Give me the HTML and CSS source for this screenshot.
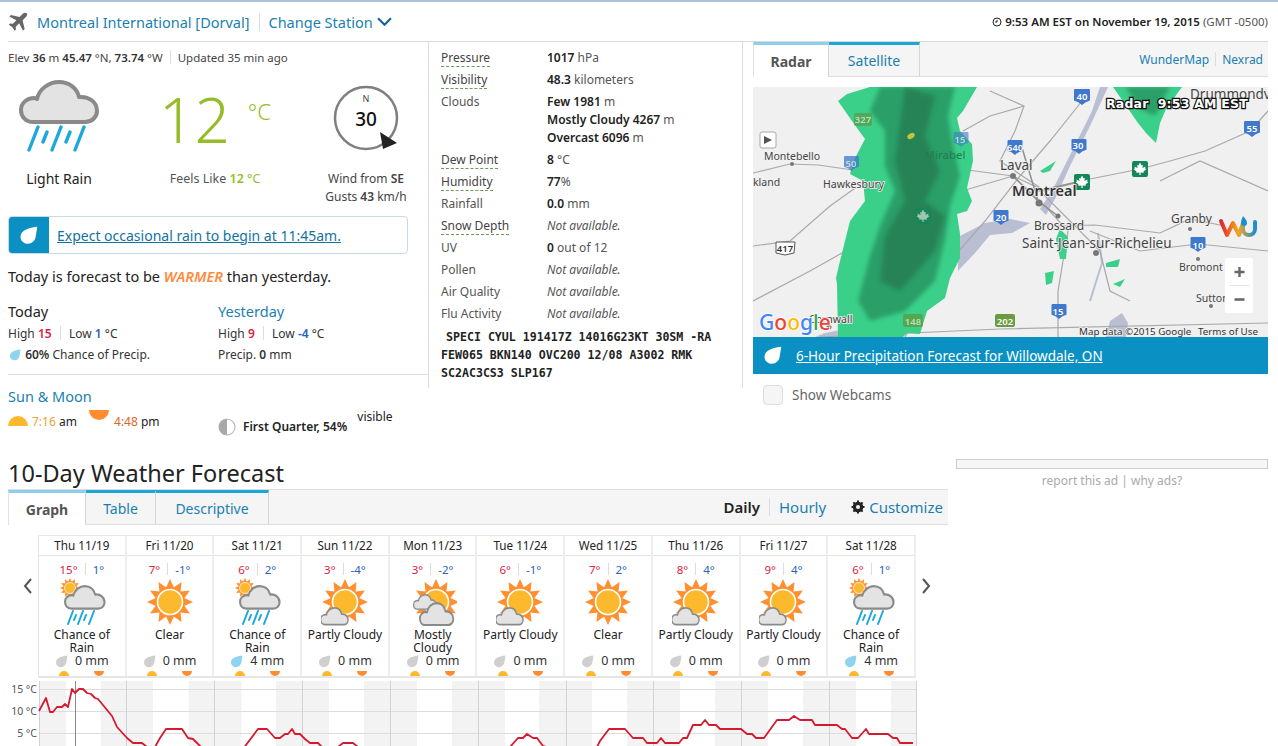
FILE: index.html
```html
<!DOCTYPE html>
<html lang="en">
<head>
<meta charset="utf-8">
<title>Montreal International [Dorval] Weather</title>
<link rel="stylesheet" href="styles.css">
</head>
<body>
<svg class="defs" width="0" height="0">
  <defs>
    <symbol id="drop" viewBox="0 0 24 24"><path d="M23 1C23 1 9 2 4 8C0 13 2 20 8 22C14 24 20 20 21 14C22 9 23 1 23 1Z"/></symbol>
    <g id="rays">
      <polygon id="ray" points="0,-23 5,-12 -5,-12"/>
      <use href="#ray" transform="rotate(30)"/><use href="#ray" transform="rotate(60)"/><use href="#ray" transform="rotate(90)"/>
      <use href="#ray" transform="rotate(120)"/><use href="#ray" transform="rotate(150)"/><use href="#ray" transform="rotate(180)"/>
      <use href="#ray" transform="rotate(210)"/><use href="#ray" transform="rotate(240)"/><use href="#ray" transform="rotate(270)"/>
      <use href="#ray" transform="rotate(300)"/><use href="#ray" transform="rotate(330)"/>
    </g>
    <g id="sun">
      <use href="#rays" fill="#ff8f2f"/>
      <circle r="12.5" fill="#fdb92e" stroke="#fff" stroke-width="1.6"/>
    </g>
    <path id="cloud" d="M14 42C6 42 2 36 2 30C2 23 8 18 15 18C16 18 17 18 18 19C20 9 30 2 40 2C50 2 58 8 60 17C70 16 78 22 78 31C78 37 73 42 66 42Z" fill="#e3e3e3" stroke="#8a8a8a" stroke-width="4" stroke-linejoin="round"/>
    <symbol id="i-clear" viewBox="0 0 48 48"><use href="#sun" transform="translate(24 24)"/></symbol>
    <symbol id="i-partly" viewBox="0 0 48 48"><use href="#sun" transform="translate(24 24)"/><use href="#cloud" transform="translate(-1 29) scale(.36 .42)"/></symbol>
    <symbol id="i-mostly" viewBox="0 0 48 48"><use href="#sun" transform="translate(27 24)"/><use href="#cloud" transform="translate(4 16) scale(.3 .36)"/><use href="#cloud" transform="translate(10 24) scale(.44 .55)"/></symbol>
    <symbol id="i-rain" viewBox="0 0 48 48">
      <g transform="translate(12 10) scale(.44)"><use href="#sun"/></g>
      <use href="#cloud" transform="translate(6 7) scale(.52 .56)"/>
      <g stroke="#1ba8dc" stroke-width="2" stroke-linecap="round"><path d="M10 46L15 33M16 42L18 37M20 46L25 33M26 42L28 37M31 46L36 33"/></g>
    </symbol>
    <symbol id="shield" viewBox="0 0 14 14"><path d="M1 0H13Q14 0 14 1V10Q10 11 7 14Q4 11 0 10V1Q0 0 1 0Z"/></symbol>
    <g id="maple">
      <rect x="-8" y="-8" width="16" height="16" rx="2" fill="#13875a"/>
      <path d="M0-6.5L1.6-3.5L3-4L2.4-1L5.6-2.4L5-.6L6.5 0L3.5 2.6L3.8 3.8L.6 3.4V6H-.6V3.4L-3.8 3.8L-3.5 2.6L-6.5 0L-5-.6L-5.6-2.4L-2.4-1L-3-4L-1.6-3.5Z" fill="#fff"/>
    </g>
    <filter id="soft"><feGaussianBlur stdDeviation="2.2"/></filter>
    <linearGradient id="wu" x1="0" x2="1"><stop offset="0" stop-color="#d92b2b"/><stop offset=".5" stop-color="#f7a71e"/><stop offset="1" stop-color="#1c8fd0"/></linearGradient>
  </defs>
</svg>

<div class="page">
  <header class="station">
    <div class="station-name">
      <svg class="plane" viewBox="0 0 24 24"><path d="M22.5 1.5C21 .2 18.800 1 17.500 2.300L13.800 6L3.500 3.500L1.500 5.500L10 10L5.800 14.200L2.500 13.800L1 15.300L5 18L8 22.500L9.500 21L9.200 17.800L13.500 13.500L18 22.500L20 20.500L17.500 10L21.200 6.300C22.500 5 23.800 3 22.500 1.500Z"/></svg>
      <a class="link">Montreal International [Dorval]</a>
      <span class="pipe tall"></span>
      <a class="link">Change Station</a>
      <svg class="chev" viewBox="0 0 14 8"><path d="M1 1L7 7L13 1"/></svg>
    </div>
    <div class="station-time">
      <svg class="clock" viewBox="0 0 10 10"><circle cx="5" cy="5" r="4"/><path d="M5 2.800V5H3"/></svg>
      <b>9:53 AM EST on November 19, 2015</b> <span class="dim">(GMT -0500)</span>
    </div>
  </header>

  <main class="now">
    <section class="col-left">
      <p class="elev">Elev <b>36</b> m <b>45.47</b> °N, <b>73.74</b> °W <span class="pipe"></span> Updated 35 min ago</p>
      <div class="headline">
        <div class="cond">
          <svg class="cond-icon" viewBox="0 0 80 72">
            <use href="#cloud"/>
            <g stroke="#1ba8dc" stroke-width="3.400" stroke-linecap="round"><path d="M10 70L19 47M24 62L28 52M33 70L42 47M47 62L51 52M56 70L65 47"/></g>
          </svg>
          <div class="cond-label">Light Rain</div>
        </div>
        <div class="temp">
          <div class="temp-big"><span class="temp-num">12</span><span class="temp-unit">°C</span></div>
          <div class="feels">Feels Like <b class="green">12</b> <span class="green">°C</span></div>
        </div>
        <div class="wind">
          <svg class="compass" viewBox="0 0 66 66">
            <circle cx="33" cy="33" r="31" fill="none" stroke="#7f7f7f" stroke-width="2.500"/>
            <text class="compass-n" x="33" y="17" text-anchor="middle">N</text>
            <text class="compass-v" x="33" y="41" text-anchor="middle">30</text>
            <path d="M47 49L64 60L50 66Z" fill="#222" transform="translate(0 -2)"/>
          </svg>
          <div class="wind-text">Wind from <b>SE</b></div>
          <div class="wind-text">Gusts <b>43</b> km/h</div>
        </div>
      </div>
      <div class="alert">
        <span class="alert-drop"><svg class="drop-white" viewBox="0 0 24 24"><use href="#drop"/></svg></span>
        <a class="alert-link">Expect occasional rain to begin at 11:45am.</a>
      </div>
      <p class="compare">Today is forecast to be <em class="warmer">WARMER</em> than yesterday.</p>
      <div class="days-pair">
        <div>
          <div class="pair-title">Today</div>
          <div class="pair-row">High <b class="hot">15</b> <span class="pipe"></span> Low <b class="cold">1</b> °C</div>
          <div class="pair-row link"><svg class="drop-blue" viewBox="0 0 24 24"><use href="#drop"/></svg> <b>60%</b> Chance of Precip.</div>
        </div>
        <div>
          <div class="pair-title link">Yesterday</div>
          <div class="pair-row">High <b class="hot">9</b> <span class="pipe"></span> Low <b class="cold">-4</b> °C</div>
          <div class="pair-row">Precip. <b>0</b> mm</div>
        </div>
      </div>
      <div class="sunmoon">
        <div class="pair-title link">Sun &amp; Moon</div>
        <div class="sunmoon-row">
          <div class="sun-times">
            <span class="rise large"></span><span class="t-rise">7:16</span> am
            <span class="set large"></span><span class="t-set">4:48</span> pm
          </div>
          <div class="moon-text">
            <svg class="moon" viewBox="0 0 18 18"><circle cx="9" cy="9" r="8" fill="#fff" stroke="#bbb" stroke-width="1.200"/><path d="M9 1A8 8 0 0 0 9 17Z" fill="#a8a8a8"/></svg>
            <b>First Quarter, 54%</b> visible
          </div>
        </div>
      </div>
    </section>

    <section class="col-mid">
      <dl class="metrics">
        <dt><span class="dash">Pressure</span></dt><dd><b>1017</b> hPa</dd>
        <dt><span class="dash">Visibility</span></dt><dd><b>48.3</b> kilometers</dd>
        <dt>Clouds</dt><dd><b>Few 1981</b> m<br><b>Mostly Cloudy 4267</b> m<br><b>Overcast 6096</b> m</dd>
        <dt><span class="dash">Dew Point</span></dt><dd><b>8</b> °C</dd>
        <dt><span class="dash">Humidity</span></dt><dd><b>77</b>%</dd>
        <dt>Rainfall</dt><dd><b>0.0</b> mm</dd>
        <dt><span class="dash">Snow Depth</span></dt><dd><i>Not available.</i></dd>
        <dt>UV</dt><dd><b>0</b> out of 12</dd>
        <dt>Pollen</dt><dd><i>Not available.</i></dd>
        <dt>Air Quality</dt><dd><i>Not available.</i></dd>
        <dt>Flu Activity</dt><dd><i>Not available.</i></dd>
      </dl>
      <p class="metar"><span class="metar-first">SPECI CYUL 191417Z 14016G23KT 30SM -RA</span> FEW065 BKN140 OVC200 12/08 A3002 RMK SC2AC3CS3 SLP167</p>
    </section>

    <section class="col-radar">
      <div class="map-tabs">
        <a class="tab tab-on">Radar</a>
        <a class="tab">Satellite</a>
        <div class="map-links"><a class="link">WunderMap</a><span class="pipe"></span><a class="link">Nexrad</a></div>
      </div>
      <svg class="map" viewBox="753 86 515 250" width="515" height="250">
        <rect x="753" y="86" width="515" height="250" fill="#f0f0f0"/>
        <!-- water -->
        <g fill="#b9bed2">
          <path d="M958 236L985 222L1010 218L1030 222L1012 232L990 234L975 252L958 270Z"/>
          <path d="M1040 208L1052 190L1092 110L1100 86L1108 86L1090 125L1070 165L1056 196L1046 214Z"/>
          <path d="M1110 320L1122 312L1128 322L1126 336H1106Z"/>
          <path d="M825 332L845 328L840 336H815Z"/>
        </g>
        <path d="M1090 300L1102 262L1098 232" fill="none" stroke="#b9bed2" stroke-width="2"/>
        <!-- roads -->
        <g fill="none" stroke="#a9a9a9" stroke-width="1.200">
          <path d="M753 172L790 163L818 164L860 170L900 172L960 168L1013 175L1045 190L1090 178L1140 168L1170 160L1205 150L1250 130L1268 110"/>
          <path d="M753 245L790 240L830 205L865 180L900 172"/>
          <path d="M753 300L810 270L890 225L945 195L1013 175"/>
          <path d="M1082 100L1050 140L1020 175L985 220L950 260L925 300L905 336"/>
          <path d="M1013 175L1045 205L1068 230L1058 290V336"/>
          <path d="M1040 190L1100 250L1110 290L1130 300"/>
          <path d="M1045 190L1000 160L1015 130L1024 105L990 90"/>
          <path d="M1090 230L1140 250L1198 243L1268 250"/>
          <path d="M820 336L1000 328L1268 322"/>
          <path d="M1058 225L1095 224L1160 232L1190 218L1225 225"/>
          <path d="M963 130L990 115L1024 105"/>
          <path d="M1160 180L1200 160L1268 190"/>
        </g>
        <g fill="none" stroke="#8f8f8f" stroke-width="1.500"><path d="M1013 175L1038 200L1058 215M1020 140L1038 200M1038 190L1090 178"/></g>
        <!-- radar -->
        <g fill="#3bd08a">
          <path d="M870 86L977 86L963 110L957 117L960 130L972 143L973 160L967 187L972 200L967 210L957 213L960 233L960 257L950 277L945 297L927 310L920 333L907 332L903 336L838 336L837 283L836 277L840 260L850 220L865 200L863 180L850 173L855 157L865 138L857 127L852 120L838 100L847 93Z"/>
          <path d="M1113 86H1182L1166 108L1160 122L1156 142L1146 132L1138 122Z"/>
          <path d="M1060 228L1068 236L1066 258L1060 258L1056 238Z"/>
          <path d="M1045 272L1054 270L1052 282L1046 284Z"/>
          <path d="M1106 262L1120 258L1118 266L1106 266Z"/>
          <path d="M1113 283L1125 278L1120 286Z"/>
          <path d="M1040 170L1056 160L1050 170L1043 172Z"/>
        </g>
        <g fill="#2c9f68" filter="url(#soft)">
          <path d="M880 86L955 86L948 115L952 140L960 175L950 205L945 240L935 280L905 310L870 320L858 300L870 255L880 225L895 190L885 165L885 130L870 110Z"/>
          <path d="M1125 86H1170L1155 115L1140 108Z"/>
        </g>
        <g fill="#287f53" filter="url(#soft)" opacity=".85">
          <path d="M905 86L935 95L925 135L940 170L925 200L945 215L935 250L900 290L880 280L885 235L905 200L895 160Z"/>
        </g>
        <ellipse cx="911" cy="135" rx="4" ry="2.500" fill="#c7c33b" transform="rotate(-30 911 135)"/>
        <!-- shields -->
        <g class="shield-blue">
          <use href="#shield" x="1074" y="88" width="16" height="16"/><use href="#shield" x="1244" y="120" width="16" height="16"/>
          <use href="#shield" x="953" y="131" width="16" height="15" opacity=".6"/><use href="#shield" x="1005" y="139" width="20" height="15"/>
          <use href="#shield" x="1071" y="138" width="16" height="15"/><use href="#shield" x="844" y="155" width="15" height="15" opacity=".75"/>
          <use href="#shield" x="993" y="209" width="16" height="15"/><use href="#shield" x="1190" y="236" width="16" height="15"/>
          <use href="#shield" x="1051" y="303" width="16" height="15"/>
        </g>
        <rect x="854" y="112" width="18" height="13" rx="2" fill="#5a9a45" opacity=".7"/>
        <rect x="903" y="313" width="20" height="13" rx="2" fill="#5d9b3f" opacity=".75"/>
        <rect x="995" y="313" width="20" height="13" rx="2" fill="#6a9b40"/>
        <path d="M776 241H795L794 252L785 254L776 252Z" fill="#fff" stroke="#555"/>
        <g class="shield-num">
          <text x="1082" y="99">40</text><text x="1252" y="131">55</text><text x="960" y="142" class="muted">15</text>
          <text x="1015" y="150">640</text><text x="1078" y="148">30</text><text x="851" y="166" class="muted">50</text>
          <text x="1001" y="220">20</text><text x="1198" y="248">10</text><text x="1058" y="314">15</text>
          <text x="863" y="122" class="muted">327</text><text x="913" y="324" class="muted">148</text><text x="1005" y="324">202</text>
        </g>
        <text class="shield-dark" x="785" y="251">417</text>
        <use href="#maple" transform="translate(1082 181)"/>
        <use href="#maple" transform="translate(1140 168)"/>
        <use href="#maple" transform="translate(923 215)" opacity=".55"/>
        <!-- towns -->
        <g fill="#777"><circle cx="792" cy="163" r="2"/><circle cx="1013" cy="175" r="3"/><circle cx="1039" cy="202" r="3.500"/><circle cx="1058" cy="215" r="2.500"/><circle cx="1096" cy="252" r="3"/><circle cx="1190" cy="228" r="2"/><circle cx="1198" cy="258" r="2"/><circle cx="1211" cy="305" r="2"/><circle cx="829" cy="326" r="2.500"/></g>
        <g class="map-label">
          <text x="792" y="159" text-anchor="middle">Montebello</text>
          <text x="753" y="185" class="clip-k">kland</text>
          <text x="823" y="187">Hawkesbury</text>
          <text x="945" y="158" class="on-radar" text-anchor="middle">Mirabel</text>
          <text x="1000" y="169" class="lg">Laval</text>
          <text x="1012" y="195" class="xl">Montreal</text>
          <text x="1034" y="229" class="md">Brossard</text>
          <text x="1022" y="247" class="lg">Saint-Jean-sur-Richelieu</text>
          <text x="1171" y="222" class="md">Granby</text>
          <text x="1179" y="270">Bromont</text>
          <text x="1196" y="301">Sutton</text>
          <text x="809" y="322">Cornwall</text>
          <text x="1190" y="98" class="lg">Drummondv</text>
          <text x="1079" y="334" class="tiny">Map data ©2015 Google</text>
          <text x="1198" y="334" class="tiny">Terms of Use</text>
        </g>
        <text class="radar-stamp" x="1106" y="107">Radar&#160;&#160;9:53 AM EST</text>
        <text class="google" x="759" y="329"><tspan fill="#4285f4">G</tspan><tspan fill="#ea4335">o</tspan><tspan fill="#fbbc05">o</tspan><tspan fill="#4285f4">g</tspan><tspan fill="#34a853">l</tspan><tspan fill="#ea4335">e</tspan></text>
        <g fill="none" stroke="url(#wu)" stroke-width="4" stroke-linejoin="round" stroke-linecap="round">
          <path d="M1221 220L1227 234L1233 222L1239 234L1243 222L1243 228C1243 236 1255 236 1255 228V221"/>
        </g>
        <path d="M1243 215Q1247 219 1247 222A3 3 0 0 1 1241 222Q1241 219 1243 215Z" fill="#1c8fd0"/>
        <rect x="760" y="131" width="16" height="16" rx="2" fill="#fff" stroke="#aaa"/>
        <path d="M764 135L772 139L764 143Z" fill="#555"/>
        <rect x="1225" y="257" width="28" height="55" rx="2" fill="#fff"/>
        <path d="M1229 284.500H1249" stroke="#e6e6e6"/>
        <path d="M1239.500 266V276M1234.500 271H1244.500M1234.500 298.500H1244.500" stroke="#666" stroke-width="2.400"/>
      </svg>
      <div class="precip-banner">
        <svg class="drop-white" viewBox="0 0 24 24"><use href="#drop"/></svg>
        <a class="banner-link">6-Hour Precipitation Forecast for Willowdale, ON</a>
      </div>
      <label class="webcams"><span class="check"></span>Show Webcams</label>
    </section>
  </main>

  <div class="lower">
    <section class="forecast">
      <h2 class="fc-title">10-Day Weather Forecast</h2>
      <div class="fc-tabs">
        <a class="tab tab-on">Graph</a>
        <a class="tab">Table</a>
        <a class="tab">Descriptive</a>
        <div class="fc-controls">
          <b class="daily">Daily</b><span class="pipe tall"></span><a class="link">Hourly</a>
          <a class="link customize"><svg class="gear" viewBox="0 0 14 14"><circle cx="7" cy="7" r="4" fill="none" stroke="#222" stroke-width="2.600"/><path d="M7 .5V13.500M.5 7H13.500M2.400 2.400L11.600 11.600M11.600 2.400L2.400 11.600" stroke="#222" stroke-width="2"/><circle cx="7" cy="7" r="2" fill="#f5f5f5"/></svg>Customize</a>
        </div>
      </div>
      <div class="fc-strip">
        <svg class="arrow" viewBox="0 0 10 16"><path d="M8 1L2 8L8 15"/></svg>
        <div class="days">
          <article class="day"><h3>Thu 11/19</h3><div class="temps"><span class="hot">15°</span><span class="pipe"></span><span class="cold">1°</span></div><svg class="ficon" viewBox="0 0 48 48"><use href="#i-rain"/></svg><div class="label">Chance of Rain</div><div class="amt"><svg class="d-gray" viewBox="0 0 24 24"><use href="#drop"/></svg>0 mm</div><div class="mini"><span class="rise"></span><span class="set"></span></div></article>
          <article class="day"><h3>Fri 11/20</h3><div class="temps"><span class="hot">7°</span><span class="pipe"></span><span class="cold">-1°</span></div><svg class="ficon" viewBox="0 0 48 48"><use href="#i-clear"/></svg><div class="label">Clear</div><div class="amt"><svg class="d-gray" viewBox="0 0 24 24"><use href="#drop"/></svg>0 mm</div><div class="mini"><span class="rise"></span><span class="set"></span></div></article>
          <article class="day"><h3>Sat 11/21</h3><div class="temps"><span class="hot">6°</span><span class="pipe"></span><span class="cold">2°</span></div><svg class="ficon" viewBox="0 0 48 48"><use href="#i-rain"/></svg><div class="label">Chance of Rain</div><div class="amt"><svg class="d-blue" viewBox="0 0 24 24"><use href="#drop"/></svg>4 mm</div><div class="mini"><span class="rise"></span><span class="set"></span></div></article>
          <article class="day"><h3>Sun 11/22</h3><div class="temps"><span class="hot">3°</span><span class="pipe"></span><span class="cold">-4°</span></div><svg class="ficon" viewBox="0 0 48 48"><use href="#i-partly"/></svg><div class="label">Partly Cloudy</div><div class="amt"><svg class="d-gray" viewBox="0 0 24 24"><use href="#drop"/></svg>0 mm</div><div class="mini"><span class="rise"></span><span class="set"></span></div></article>
          <article class="day"><h3>Mon 11/23</h3><div class="temps"><span class="hot">3°</span><span class="pipe"></span><span class="cold">-2°</span></div><svg class="ficon" viewBox="0 0 48 48"><use href="#i-mostly"/></svg><div class="label">Mostly Cloudy</div><div class="amt"><svg class="d-gray" viewBox="0 0 24 24"><use href="#drop"/></svg>0 mm</div><div class="mini"><span class="rise"></span><span class="set"></span></div></article>
          <article class="day"><h3>Tue 11/24</h3><div class="temps"><span class="hot">6°</span><span class="pipe"></span><span class="cold">-1°</span></div><svg class="ficon" viewBox="0 0 48 48"><use href="#i-partly"/></svg><div class="label">Partly Cloudy</div><div class="amt"><svg class="d-gray" viewBox="0 0 24 24"><use href="#drop"/></svg>0 mm</div><div class="mini"><span class="rise"></span><span class="set"></span></div></article>
          <article class="day"><h3>Wed 11/25</h3><div class="temps"><span class="hot">7°</span><span class="pipe"></span><span class="cold">2°</span></div><svg class="ficon" viewBox="0 0 48 48"><use href="#i-clear"/></svg><div class="label">Clear</div><div class="amt"><svg class="d-gray" viewBox="0 0 24 24"><use href="#drop"/></svg>0 mm</div><div class="mini"><span class="rise"></span><span class="set"></span></div></article>
          <article class="day"><h3>Thu 11/26</h3><div class="temps"><span class="hot">8°</span><span class="pipe"></span><span class="cold">4°</span></div><svg class="ficon" viewBox="0 0 48 48"><use href="#i-partly"/></svg><div class="label">Partly Cloudy</div><div class="amt"><svg class="d-gray" viewBox="0 0 24 24"><use href="#drop"/></svg>0 mm</div><div class="mini"><span class="rise"></span><span class="set"></span></div></article>
          <article class="day"><h3>Fri 11/27</h3><div class="temps"><span class="hot">9°</span><span class="pipe"></span><span class="cold">4°</span></div><svg class="ficon" viewBox="0 0 48 48"><use href="#i-partly"/></svg><div class="label">Partly Cloudy</div><div class="amt"><svg class="d-gray" viewBox="0 0 24 24"><use href="#drop"/></svg>0 mm</div><div class="mini"><span class="rise"></span><span class="set"></span></div></article>
          <article class="day"><h3>Sat 11/28</h3><div class="temps"><span class="hot">6°</span><span class="pipe"></span><span class="cold">1°</span></div><svg class="ficon" viewBox="0 0 48 48"><use href="#i-rain"/></svg><div class="label">Chance of Rain</div><div class="amt"><svg class="d-blue" viewBox="0 0 24 24"><use href="#drop"/></svg>4 mm</div><div class="mini"><span class="rise"></span><span class="set"></span></div></article>
        </div>
        <svg class="arrow" viewBox="0 0 10 16"><path d="M2 1L8 8L2 15"/></svg>
      </div>
      <svg class="chart" viewBox="8 680 909 66" width="909" height="66">
        <g fill="#f3f3f3">
          <rect x="39" y="680" width="27" height="66"/><rect x="101" y="680" width="52" height="66"/><rect x="188.500" y="680" width="53" height="66"/>
          <rect x="276" y="680" width="53" height="66"/><rect x="364" y="680" width="53" height="66"/><rect x="452" y="680" width="53" height="66"/>
          <rect x="539" y="680" width="53" height="66"/><rect x="627" y="680" width="53" height="66"/><rect x="715" y="680" width="53" height="66"/>
          <rect x="803" y="680" width="53" height="66"/><rect x="891" y="680" width="26" height="66"/>
        </g>
        <g stroke="#dcdcdc" fill="none">
          <path d="M39 688.500H917M39 710.500H917M39 732.500H917"/>
          <path d="M39.500 680V746M126.500 680V746M214.500 680V746M302.500 680V746M390.500 680V746M478.500 680V746M566.500 680V746M653.500 680V746M741.500 680V746M829.500 680V746M916.500 680V746" stroke="#d2d2d2"/>
        </g>
        <path d="M75.500 677V746" stroke="#8a8a8a" fill="none"/>
        <path class="temp-line" d="M39 710L46 697L50 711L53 711L57 706L62 706L65 703L68 706L72 688L75 692L79 688L83 688L87 692L91 693L95 697L98 698L112 715L117 726L127 737L133 742L142 742L147 746L155 746L160 737L166 728L182 728L188 737L193 738L200 745L203 748"/>
        <path class="temp-line" d="M243 748L258 728L267 728L275 737L280 737L285 733L288 733L292 728L295 733L300 733L305 738L310 742L318 742L322 746L338 746L343 742L353 742L358 746L361 748"/>
        <path class="temp-line" d="M437 746L453 746"/>
        <path class="temp-line" d="M510 746L518 737L523 737L527 733L533 737L537 737L543 745L547 746"/>
        <path class="temp-line" d="M596 748L600 740L609 728L625 728L633 737L643 737L647 742L657 742L661 737L665 742L679 742L683 737L687 737L693 724L701 724L705 719L709 724L716 724L720 728L741 728L747 733L752 733L756 737L764 737L777 719L789 719L794 715L800 719L812 719L815 724L837 724L842 728L845 728L852 737L858 737L866 728L869 733L888 733L893 737L897 737L900 742L913 742"/>
        <g class="chart-label">
          <text x="37" y="692">15 °C</text><text x="37" y="714">10 °C</text><text x="37" y="736">5 °C</text>
        </g>
      </svg>
    </section>
    <aside class="ad">
      <div class="ad-box"></div>
      <p class="ad-note">report this ad | why ads?</p>
    </aside>
  </div>
</div>
</body>
</html>
```
FILE: styles.css
```css
* { box-sizing: border-box; }
html, body { margin: 0; padding: 0; background: #fff; }
body { font-family: "Noto Sans", "Open Sans", sans-serif; font-size: 12px; color: #222; overflow: hidden; }
p, h2, h3, dl, dd { margin: 0; }
a { color: inherit; }
b { font-weight: 600; }
.defs { position: absolute; }
.page { height: 746px; overflow: hidden; padding: 0 10px 0 8px; border-top: 2px solid #abc2dd; }

.link { color: #1a7fb0; }
.pipe { display: inline-block; width: 1px; height: 14px; background: #ddd; vertical-align: -2px; margin: 0 6px; }
.pipe.tall { height: 18px; }
.hot { color: #d9233e; }
.cold { color: #2a62b8; }
.green { color: #95bd2a; }
.dim { color: #555; }

/* station */
.station { height: 39px; display: flex; justify-content: space-between; align-items: center; }
.station-name { display: flex; align-items: center; font-size: 14.5px; }
.plane { width: 20px; height: 20px; fill: #666; margin-right: 9px; }
.station-name .pipe { margin: 0 9px; }
.chev { width: 15px; height: 9px; margin-left: 4px; fill: none; stroke: #14609c; stroke-width: 2; }
.station-time { font-size: 11.5px; display: flex; align-items: center; gap: 3px; white-space: pre; }
.clock { width: 10px; height: 10px; fill: none; stroke: #222; stroke-width: 1; }

/* now row */
.now { display: flex; border-top: 1px solid #d9d9d9; height: 364px; }
.col-left { width: 421px; height: 346px; border-right: 1px solid #ddd; }
.elev { line-height: 18px; padding-top: 7px; font-size: 11.5px; color: #444; }
.elev .pipe { margin: 0 4px; }
.elev b { color: #333; }
.headline { display: grid; grid-template-columns: 102px 210px 92px; height: 139px; }
.cond { padding-top: 13px; text-align: center; }
.cond-icon { width: 80px; height: 72px; display: block; margin: 0 auto; }
.cond-label { font-size: 14px; line-height: 18px; margin-top: 18px; }
.temp { text-align: center; }
.temp-big { display: flex; justify-content: center; height: 103px; color: #95bd2a; font-weight: 300; padding-top: 17px; }
.temp-num { font-size: 62px; line-height: 70px; font-weight: 300; }
.temp-unit { font-size: 22px; line-height: 54px; margin-left: 18px; }
.feels { font-size: 12.500px; line-height: 18px; color: #555; }
.wind { padding-top: 18px; text-align: center; }
.compass { display: block; width: 66px; height: 66px; margin: 0 auto 19px; }
.compass-n { font-size: 9px; fill: #444; }
.compass-v { font-size: 19px; font-weight: 500; fill: #111; }
.wind-text { font-size: 12px; line-height: 18px; color: #444; white-space: nowrap; }

.alert { margin-top: 10px; width: 400px; height: 38px; border: 1px solid #c8dbe3; border-radius: 4px; display: flex; align-items: center; overflow: hidden; }
.alert-drop { width: 41px; height: 38px; margin-left: -1px; background: #0a90c2; display: flex; align-items: center; justify-content: center; }
.drop-white { width: 19px; height: 19px; fill: #fff; flex: none; }
.alert-link { margin-left: 8px; font-size: 14px; color: #13739f; text-decoration: underline; }
.compare { font-size: 14.500px; line-height: 20px; margin-top: 12px; }
.warmer { color: #ff8a3d; font-weight: 600; }
.days-pair { display: grid; grid-template-columns: 210px 1fr; margin-top: 15px; height: 74px; border-bottom: 1px solid #ddd; }
.days-pair > div { line-height: 22px; }
.pair-title { font-size: 14.500px; line-height: 20px; }
.pair-row { font-size: 12px; line-height: 21px; color: #333; display: block; }
.pair-row .pipe { margin: 0 5px; }
.days-pair > div > .pair-title + .pair-row { margin-top: 2px; }
.drop-blue { width: 12px; height: 12px; fill: #8ed4f0; vertical-align: -2px; margin: 0 1px; }
.sunmoon { padding-top: 11px; }
.sunmoon-row { display: grid; grid-template-columns: 210px 1fr; margin-top: 4px; font-size: 12px; line-height: 20px; }
.sun-times { white-space: nowrap; }
.rise, .set { display: inline-block; width: 10px; height: 5px; }
.rise { background: #fdb92e; border-radius: 5px 5px 0 0; }
.set { background: #ff8c2e; border-radius: 0 0 5px 5px; }
.rise.large, .set.large { width: 20px; height: 10px; }
.rise.large { border-radius: 10px 10px 0 0; margin-right: 4px; }
.set.large { border-radius: 0 0 10px 10px; margin: 0 5px 3px 9px; vertical-align: 3px; }
.t-rise { color: #e8a33a; }
.t-set { color: #d9662b; }
.moon-text { display: flex; align-items: center; gap: 7px; white-space: pre; margin-top: -3px; }
.moon { width: 18px; height: 18px; }

/* metrics */
.col-mid { width: 314px; height: 346px; border-right: 1px solid #ddd; padding: 5px 0 0 12px; }
.metrics { display: grid; grid-template-columns: 106px 1fr; font-size: 12px; line-height: 18px; color: #555; }
.metrics dt, .metrics dd { padding: 2px 0; }
.metrics b { color: #222; }
.metrics i { color: #555; }
.dash { display: inline-block; line-height: 17px; border-bottom: 1px dashed #6a9c58; color: #444; }
.metar { margin-top: 3px; font: 11.600px/18px "DejaVu Sans Mono", monospace; color: #222; font-weight: 600; width: 290px; }
.metar-first { padding-left: 5px; }

/* radar */
.col-radar { width: 515px; margin-left: 10px; }
.map-tabs, .fc-tabs { display: flex; align-items: stretch; background: #f5f5f5; border-bottom: 1px solid #ddd; }
.map-tabs { height: 35px; }
.tab { border-top: 3px solid #1aa6d6; border-right: 1px solid #d5d5d5; color: #1a7fb0; font-size: 14px; display: flex; align-items: center; justify-content: center; }
.tab-on { border-top-color: #8ccfe8; background: #fff; color: #555; font-weight: 700; margin-bottom: -1px; border-left: 1px solid #e2e2e2; }
.map-tabs .tab { padding: 0 16px; }
.map-tabs .tab-on { width: 76px; }
.map-tabs .tab:nth-child(2) { width: 91px; }
.map-links { margin-left: auto; font-size: 12px; padding-right: 5px; display: flex; align-items: center; }
.map-links .pipe { margin: 0 6px; }
.map { display: block; margin-top: 10px; }
.shield-blue { fill: #3f78cc; }
.shield-num text { font: 600 9.500px "Noto Sans", sans-serif; fill: #fff; text-anchor: middle; }
.shield-num .muted { fill: #d4ecd8; opacity: .8; }
.shield-dark { font: 600 9.500px "Noto Sans", sans-serif; fill: #333; text-anchor: middle; }
.map-label text { font-size: 10.500px; fill: #444; paint-order: stroke; stroke: #f2f2f2; stroke-width: 1.500px; }
.map-label .md { font-size: 12px; }
.map-label .lg { font-size: 13.500px; }
.map-label .xl { font-size: 14.500px; font-weight: 600; fill: #333; }
.map-label .tiny { font-size: 9.800px; fill: #333; }
.map-label .on-radar { fill: #1f7d52; stroke: none; font-size: 11.500px; }
.radar-stamp { font: 700 12.500px "DejaVu Sans", sans-serif; letter-spacing: .2px; fill: #fff; stroke: #111; stroke-width: 2.500px; paint-order: stroke; }
.google { font: 500 21px "Noto Sans", sans-serif; paint-order: stroke; stroke: #fff; stroke-width: 1.500px; }
.precip-banner { height: 37px; background: #0a90c2; display: flex; align-items: center; padding-left: 10px; gap: 14px; }
.banner-link { color: #fff; font-size: 13.500px; text-decoration: underline; }
.webcams { display: flex; align-items: center; gap: 9px; margin: 11px 0 0 10px; font-size: 13.500px; color: #666; }
.check { width: 20px; height: 20px; background: #f5f5f5; border: 1px solid #ddd; border-radius: 4px; }

/* lower */
.lower { display: flex; gap: 8px; margin-top: 53px; }
.forecast { width: 940px; flex: none; }
.fc-title { font-size: 23.500px; font-weight: 400; line-height: 30px; height: 31px; }
.fc-tabs { height: 36px; border-top: 1px solid #ddd; }
.fc-tabs .tab { font-size: 14px; }
.fc-tabs .tab:nth-child(1) { width: 78px; }
.fc-tabs .tab:nth-child(2) { width: 70px; }
.fc-tabs .tab:nth-child(3) { width: 113px; }
.fc-controls { margin-left: auto; display: flex; align-items: center; font-size: 15px; padding-right: 5px; }
.daily { color: #222; font-weight: 600; }
.fc-controls .pipe { margin: 0 9px; }
.customize { display: flex; align-items: center; gap: 4px; margin-left: 25px; }
.gear { width: 14px; height: 14px; }
.fc-strip { display: flex; align-items: flex-start; margin-top: 10px; }
.arrow { width: 10px; height: 16px; margin: 43px 5px 0 15px; fill: none; stroke: #555; stroke-width: 2; flex: none; }
.days + .arrow { margin: 43px 0 0 5px; }
.days { width: 878px; display: grid; grid-template-columns: repeat(10, 1fr); border: solid #e6e6e6; border-width: 1px 0 2px 1px; flex: none; }
.day { border-right: 2px solid #eee; height: 140px; text-align: center; overflow: hidden; }
.day h3 { font-size: 11.700px; font-weight: 400; line-height: 19px; height: 20px; border-bottom: 1px solid #e2e2e2; color: #222; }
.temps { font-size: 11.500px; height: 22px; padding-top: 4px; line-height: 17px; display: flex; justify-content: center; align-items: center; }
.temps .pipe { margin: 0 7px; height: 12px; }
.ficon { display: block; width: 48px; height: 48px; margin: 0 auto; }
.label { font-size: 12px; line-height: 12.500px; height: 28px; padding: 3px 4px 0; white-space: normal; }
.amt { font-size: 12.500px; line-height: 14px; display: flex; justify-content: center; align-items: center; gap: 7px; color: #333; }
.d-gray, .d-blue { width: 13px; height: 13px; }
.d-gray { fill: #cfcfcf; }
.d-blue { fill: #8ed4f0; }
.mini { display: flex; justify-content: center; gap: 25px; margin-top: 3px; }
.chart { display: block; margin-top: 3px; }
.temp-line { fill: none; stroke: #d5192f; stroke-width: 1.800; stroke-linejoin: round; }
.chart-label text { font-size: 10.500px; fill: #555; text-anchor: end; }

/* ad */
.ad { width: 312px; padding-top: 1px; }
.ad-box { height: 10px; background: #f6f6f6; border: 1px solid #ccc; }
.ad-note { text-align: center; font-size: 12px; color: #aaa; line-height: 16px; margin-top: 4px; }
```
